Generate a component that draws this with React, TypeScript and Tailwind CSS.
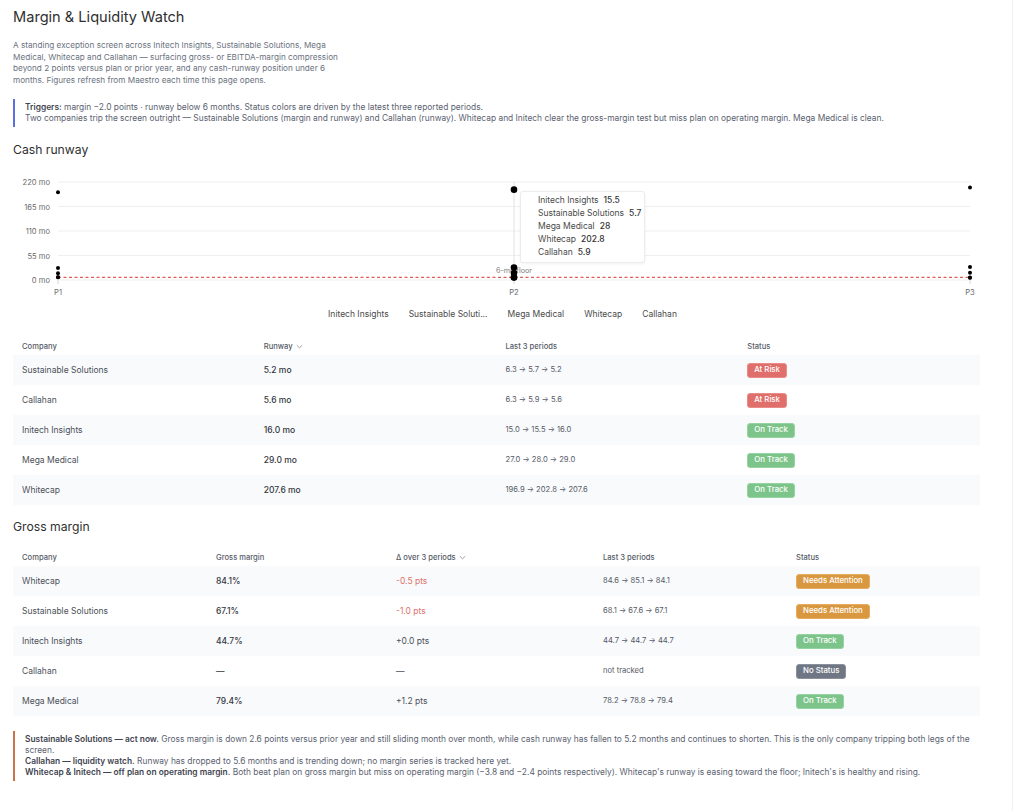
const runwaySeries = [
  { name: "Initech Insights", values: [15.0, 15.5, 16.0] },
  { name: "Sustainable Solutions", values: [6.3, 5.7, 5.2] },
  { name: "Mega Medical", values: [27.0, 28.0, 29.0] },
  { name: "Whitecap", values: [196.9, 202.8, 207.6] },
  { name: "Callahan", values: [6.3, 5.9, 5.6] },
];

const tooltipRows = [
  ["Initech Insights", "15.5"],
  ["Sustainable Solutions", "5.7"],
  ["Mega Medical", "28"],
  ["Whitecap", "202.8"],
  ["Callahan", "5.9"],
];

const legendItems = [
  "Initech Insights",
  "Sustainable Soluti...",
  "Mega Medical",
  "Whitecap",
  "Callahan",
];

type Tone = "risk" | "ok" | "warn" | "none";

const runwayRows: { company: string; runway: string; trend: string; status: string; tone: Tone }[] = [
  { company: "Sustainable Solutions", runway: "5.2 mo", trend: "6.3 → 5.7 → 5.2", status: "At Risk", tone: "risk" },
  { company: "Callahan", runway: "5.6 mo", trend: "6.3 → 5.9 → 5.6", status: "At Risk", tone: "risk" },
  { company: "Initech Insights", runway: "16.0 mo", trend: "15.0 → 15.5 → 16.0", status: "On Track", tone: "ok" },
  { company: "Mega Medical", runway: "29.0 mo", trend: "27.0 → 28.0 → 29.0", status: "On Track", tone: "ok" },
  { company: "Whitecap", runway: "207.6 mo", trend: "196.9 → 202.8 → 207.6", status: "On Track", tone: "ok" },
];

const marginRows: {
  company: string;
  margin: string;
  delta: string;
  negative: boolean;
  trend: string;
  status: string;
  tone: Tone;
}[] = [
  { company: "Whitecap", margin: "84.1%", delta: "-0.5 pts", negative: true, trend: "84.6 → 85.1 → 84.1", status: "Needs Attention", tone: "warn" },
  { company: "Sustainable Solutions", margin: "67.1%", delta: "-1.0 pts", negative: true, trend: "68.1 → 67.6 → 67.1", status: "Needs Attention", tone: "warn" },
  { company: "Initech Insights", margin: "44.7%", delta: "+0.0 pts", negative: false, trend: "44.7 → 44.7 → 44.7", status: "On Track", tone: "ok" },
  { company: "Callahan", margin: "—", delta: "—", negative: false, trend: "not tracked", status: "No Status", tone: "none" },
  { company: "Mega Medical", margin: "79.4%", delta: "+1.2 pts", negative: false, trend: "78.2 → 78.8 → 79.4", status: "On Track", tone: "ok" },
];

const toneClass: Record<Tone, string> = {
  risk: "bg-[#e06f6b] border-[#e98b87]",
  ok: "bg-[#7cc48a] border-[#95d3a1]",
  warn: "bg-[#d9983f] border-[#e4ad5f]",
  none: "bg-[#6f7785] border-[#8a919d]",
};

function Badge({ label, tone }: { label: string; tone: Tone }) {
  return (
    <span
      className={`inline-flex h-[15px] items-center rounded-[3px] border px-[6px] text-[7.8px] font-medium leading-none text-white ${toneClass[tone]}`}
    >
      {label}
    </span>
  );
}

function Chevron() {
  return (
    <svg width="7" height="5" viewBox="0 0 7 5" className="ml-[3px] inline-block">
      <path d="M0.8 1.2 L3.5 3.8 L6.2 1.2" fill="none" stroke="#8a8a8a" strokeWidth="0.8" />
    </svg>
  );
}

const xs = [45, 501, 957];
const yOf = (v: number) => 105 - (v * 98) / 220;

function RunwayChart() {
  const ticks = [220, 165, 110, 55, 0];
  return (
    <div className="relative mt-[17px] h-[125px] w-[967px]">
      <svg width="967" height="125" className="block">
        {ticks.map((t) => (
          <g key={t}>
            <line x1={45} x2={957} y1={yOf(t)} y2={yOf(t)} stroke="#efefef" strokeWidth="1" />
            <text
              x={37}
              y={yOf(t) + 3}
              textAnchor="end"
              fontSize="7.6"
              fill="#6b6b6b"
              fontFamily="Inter, sans-serif"
            >
              {t} mo
            </text>
          </g>
        ))}
        <line x1={501} x2={501} y1={7} y2={105} stroke="#e2e2e2" strokeWidth="1" />
        <line
          x1={45}
          x2={957}
          y1={yOf(6)}
          y2={yOf(6)}
          stroke="#e25c58"
          strokeWidth="1.3"
          strokeDasharray="3 2.5"
        />
        <text x={501} y={98} textAnchor="middle" fontSize="7.2" fill="#7d7d7d" fontFamily="Inter, sans-serif">
          6-mo floor
        </text>
        {xs.map((x, i) => (
          <g key={x}>
            <line x1={x} x2={x} y1={105} y2={109} stroke="#d6d6d6" strokeWidth="1" />
            <text x={x} y={120} textAnchor="middle" fontSize="7.6" fill="#6b6b6b" fontFamily="Inter, sans-serif">
              P{i + 1}
            </text>
          </g>
        ))}
        {runwaySeries.map((s) =>
          s.values.map((v, i) => (
            <circle key={s.name + i} cx={xs[i]} cy={yOf(v)} r={i === 1 ? 3.3 : 2} fill="#000" />
          )),
        )}
      </svg>
      <div className="absolute left-[507px] top-[16px] w-[125px] rounded-[3px] border border-[#ececec] bg-white pb-[3px] pl-[17px] pt-[2px] shadow-[0_1px_3px_rgba(0,0,0,0.06)]">
        {tooltipRows.map(([name, value]) => (
          <div key={name} className="flex gap-[5px] whitespace-nowrap text-[8.5px] leading-[13px] text-[#4a4a4a]">
            <span>{name}</span>
            <span className="font-medium text-[#333]">{value}</span>
          </div>
        ))}
      </div>
    </div>
  );
}

function Callout({ border, children }: { border: string; children: React.ReactNode }) {
  return (
    <div className={`border-l-2 pl-[10px] ${border}`}>{children}</div>
  );
}

export default function App() {
  return (
    <div
      className="min-h-screen w-[1013px] border-r border-[#f1f1f1] bg-white text-[#4b5563]"
      style={{ fontFamily: "Inter, 'Noto Sans', sans-serif" }}
    >
      <div className="w-[980px] pl-[13px] pt-[7px] pb-[40px]">
        <h1 className="text-[14.6px] font-normal leading-[20px] text-[#2f2f2f]">Margin &amp; Liquidity Watch</h1>

        <p className="mt-[13px] w-[345px] text-[8.2px] leading-[11.5px] text-[#6b7280]">
          A standing exception screen across Initech Insights, Sustainable Solutions, Mega Medical, Whitecap and
          Callahan — surfacing gross- or EBITDA-margin compression beyond 2 points versus plan or prior year, and any
          cash-runway position under 6 months. Figures refresh from Maestro each time this page opens.
        </p>

        <div className="mt-[13px]">
          <Callout border="border-[#5a6fe0]">
            <div className="py-[3px] text-[8.4px] leading-[11px] text-[#5b6270]">
              <div>
                <span className="font-semibold text-[#3f4550]">Triggers:</span> margin −2.0 points · runway below 6
                months. Status colors are driven by the latest three reported periods.
              </div>
              <div>
                Two companies trip the screen outright — Sustainable Solutions (margin and runway) and Callahan
                (runway). Whitecap and Initech clear the gross-margin test but miss plan on operating margin. Mega
                Medical is clean.
              </div>
            </div>
          </Callout>
        </div>

        <h2 className="mt-[15px] text-[12.2px] font-normal leading-[16px] text-[#2f2f2f]">Cash runway</h2>

        <RunwayChart />

        <div className="mt-[8px] flex w-[967px] justify-center gap-[20px] pl-[12px] text-[8.5px] leading-[12px] text-[#4a4a4a]">
          {legendItems.map((l) => (
            <span key={l}>{l}</span>
          ))}
        </div>

        <div className="mt-[18px] w-[967px]">
          <div className="grid h-[17px] grid-cols-4 items-center text-[7.6px] font-medium text-[#555b66]">
            <div className="pl-[9px]">Company</div>
            <div className="flex items-center pl-[9px]">
              Runway
              <Chevron />
            </div>
            <div className="pl-[9px]">Last 3 periods</div>
            <div className="pl-[9px]">Status</div>
          </div>
          {runwayRows.map((r, i) => (
            <div
              key={r.company}
              className={`grid h-[30px] grid-cols-4 items-center ${i % 2 === 0 ? "bg-[#f9fafc]" : "bg-white"}`}
            >
              <div className="pl-[9px] text-[8.5px] text-[#4b5059]">{r.company}</div>
              <div className="pl-[9px] text-[8.5px] font-medium text-[#33373d]">{r.runway}</div>
              <div className="pl-[9px] text-[7.6px] text-[#555b66]">{r.trend}</div>
              <div className="flex items-center pl-[9px]">
                <Badge label={r.status} tone={r.tone} />
              </div>
            </div>
          ))}
        </div>

        <h2 className="mt-[14px] text-[12.2px] font-normal leading-[16px] text-[#2f2f2f]">Gross margin</h2>

        <div className="mt-[15px] w-[967px]">
          <div className="grid h-[16px] grid-cols-[194px_180px_207px_193px_193px] items-center text-[7.6px] font-medium text-[#555b66]">
            <div className="pl-[9px]">Company</div>
            <div className="pl-[9px]">Gross margin</div>
            <div className="flex items-center pl-[9px]">
              Δ over 3 periods
              <Chevron />
            </div>
            <div className="pl-[9px]">Last 3 periods</div>
            <div className="pl-[9px]">Status</div>
          </div>
          {marginRows.map((r, i) => (
            <div
              key={r.company}
              className={`grid h-[30px] grid-cols-[194px_180px_207px_193px_193px] items-center ${
                i % 2 === 0 ? "bg-[#f9fafc]" : "bg-white"
              }`}
            >
              <div className="pl-[9px] text-[8.5px] text-[#4b5059]">{r.company}</div>
              <div className="pl-[9px] text-[8.5px] font-medium text-[#33373d]">{r.margin}</div>
              <div className={`pl-[9px] text-[8.5px] ${r.negative ? "text-[#e0726c]" : "text-[#4b5059]"}`}>
                {r.delta}
              </div>
              <div className="pl-[9px] text-[7.6px] text-[#555b66]">{r.trend}</div>
              <div className="flex items-center pl-[9px]">
                <Badge label={r.status} tone={r.tone} />
              </div>
            </div>
          ))}
        </div>

        <div className="mt-[15px] w-[967px]">
          <Callout border="border-[#c8734a]">
            <div className="py-[3px] pr-[4px] text-[8.4px] leading-[11px] text-[#5b6270]">
              <p>
                <span className="font-semibold text-[#3f4550]">Sustainable Solutions — act now.</span> Gross margin is
                down 2.6 points versus prior year and still sliding month over month, while cash runway has fallen to
                5.2 months and continues to shorten. This is the only company tripping both legs of the screen.
              </p>
              <p>
                <span className="font-semibold text-[#3f4550]">Callahan — liquidity watch.</span> Runway has dropped to
                5.6 months and is trending down; no margin series is tracked here yet.
              </p>
              <p>
                <span className="font-semibold text-[#3f4550]">Whitecap &amp; Initech — off plan on operating margin.</span>{" "}
                Both beat plan on gross margin but miss on operating margin (−3.8 and −2.4 points respectively).
                Whitecap's runway is easing toward the floor; Initech's is healthy and rising.
              </p>
            </div>
          </Callout>
        </div>
      </div>
    </div>
  );
}
